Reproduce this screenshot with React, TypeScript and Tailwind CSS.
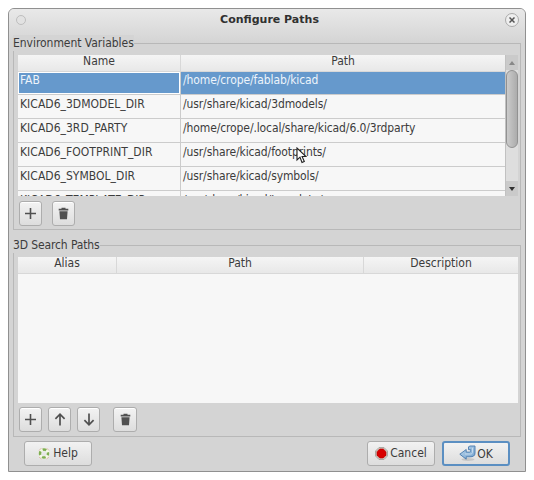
import type { ReactNode } from 'react';

const variables = [
  { name: 'KICAD6_3DMODEL_DIR', path: '/usr/share/kicad/3dmodels/' },
  { name: 'KICAD6_3RD_PARTY', path: '/home/crope/.local/share/kicad/6.0/3rdparty' },
  { name: 'KICAD6_FOOTPRINT_DIR', path: '/usr/share/kicad/footprints/' },
  { name: 'KICAD6_SYMBOL_DIR', path: '/usr/share/kicad/symbols/' },
  { name: 'KICAD6_TEMPLATE_DIR', path: '/usr/share/kicad/template/' },
];

function IconButton({ children, label, className = 'w-[23px]' }: { children: ReactNode; label: string; className?: string }) {
  return (
    <button
      aria-label={label}
      className={`flex h-[25px] shrink-0 items-center justify-center rounded-[3px] border border-[#adadad] bg-linear-to-b from-[#f3f3f3] to-[#dddddd] shadow-[inset_0_1px_0_#fff] ${className}`}
    >
      {children}
    </button>
  );
}

function Plus() {
  return (
    <svg width="13" height="13" viewBox="0 0 13 13" fill="none" stroke="#505050" strokeWidth="1.6">
      <path d="M6.5 1v11M1 6.5h11" />
    </svg>
  );
}

function Arrow({ down = false }: { down?: boolean }) {
  return (
    <svg width="12" height="13" viewBox="0 0 12 13" fill="none" stroke="#505050" strokeWidth="1.7" className={down ? 'rotate-180' : ''}>
      <path d="M6 12.5V1.5M1.4 5.8L6 1.2L10.6 5.8" />
    </svg>
  );
}

function Trash() {
  return (
    <svg width="11" height="13" viewBox="0 0 11 13" fill="#505050">
      <path d="M3.5 .7h4v1h2.8v1.8H.7V1.7h2.8zM1.4 4.2h8.2L9 12.2H2z" />
    </svg>
  );
}

function Lifebuoy() {
  return (
    <svg width="12" height="13" viewBox="0 0 12 13" fill="none">
      <circle cx="6" cy="6.5" r="4" stroke="#f4f7e8" strokeWidth="3" />
      <circle cx="6" cy="6.5" r="4" stroke="#7fae52" strokeWidth="2.5" strokeDasharray="3.7 2.583" strokeDashoffset="1.85" />
      <path d="M1 3.5L3.5 1M8.5 1L11 3.5M1 10l2.5 2M8.5 12l2.5-2" stroke="#d9b29c" strokeWidth="0.8" />
    </svg>
  );
}

function Stop() {
  return (
    <svg width="13" height="13" viewBox="0 0 13 13">
      <path d="M4 .5h5l3.500 3.500v5L9 12.500H4L.5 9V4z" fill="#d4d1c8" stroke="#a5a49f" strokeWidth="0.9" />
      <path d="M4.700 2h3.600L11 4.700v3.600L8.300 11H4.700L2 8.300V4.700z" fill="#d80000" stroke="#b80000" strokeWidth="0.7" />
    </svg>
  );
}

function Return() {
  return (
    <svg width="17" height="17" viewBox="0 0 17 17">
      <defs>
        <linearGradient id="blue" x1="0" y1="0" x2="1" y2="1">
          <stop offset="0" stopColor="#c1d9ed" />
          <stop offset="1" stopColor="#6e9fcd" />
        </linearGradient>
      </defs>
      <ellipse cx="9" cy="14.5" rx="6.5" ry="1.5" fill="#c6c6c6" />
      <path d="M9.5 1.8L11 1h5v7c0 3-2 3.8-5 3.8H7.2v2.4L.8 9.200l6.400-4.700v2.600h3c1.100 0 1.400-.4 1.400-1.500V4.700H9.500z" fill="url(#blue)" stroke="#4779ae" strokeWidth="0.9" />
      <path d="M13.500 2.800v4.600c0 1.100-.8 1.600-2 1.600H6" fill="none" stroke="#d5e5f3" strokeWidth="0.8" />
    </svg>
  );
}

function HeaderCell({ children, className }: { children: string; className: string }) {
  return <div className={`text-center leading-[13px] ${className}`}>{children}</div>;
}

const header = 'flex h-[17px] shrink-0 border-b border-[#d8d8d8] bg-linear-to-b from-[#f5f5f5] to-[#e8e8e8]';
const group = 'mx-1 flex shrink-0 flex-col border border-[#b8b8b8] pl-1 pr-[2px]';
const legend = '-ml-[5px] -mt-[9px] h-4 shrink-0 self-start bg-[#d4d4d4] leading-4';

export default function App() {
  return (
    <div className="relative h-[480px] w-[534px] overflow-hidden bg-white pl-2 pt-2 font-['DejaVu_Sans_Condensed','DejaVu_Sans',sans-serif] text-[12px] text-[#3c3c3c]">
      <div className="flex h-[464px] w-[518px] flex-col rounded-t-[6px] border border-[#909090] bg-[#d4d4d4]">
        <header className="flex h-[34px] shrink-0 items-start rounded-t-[5px] bg-linear-to-b from-[#e9e9e9] to-[#d4d4d4] pl-[7px] pr-[6px] pt-1">
          <span className="mt-[2px] h-[10px] w-[10px] rounded-full border border-[#bebebe] bg-[#e2e2e2]" />
          <h1 className="flex-1 pl-[8px] text-center font-['DejaVu_Sans',sans-serif] text-[11px] font-bold leading-[14px] text-[#303030]">Configure Paths</h1>
          <button aria-label="Close" className="flex h-[14px] w-[14px] items-center justify-center rounded-full border border-[#aaa] bg-[#eee]">
            <svg width="6" height="6" viewBox="0 0 6 6" stroke="#555" strokeWidth="1.5"><path d="M.5 .5l5 5M5.5 .5l-5 5" /></svg>
          </button>
        </header>

        <section className={`${group} h-[187px]`}>
          <h2 className={`${legend} tracking-[-0.04px]`}>Environment Variables</h2>
          <div className="mt-[4px] flex h-[141px] shrink-0">
            <div className="flex w-[487px] flex-col overflow-hidden bg-[#f7f7f7]">
              <div className={header}>
                <HeaderCell className="w-[163px] border-r border-[#d8d8d8]">Name</HeaderCell>
                <HeaderCell className="flex-1">Path</HeaderCell>
              </div>
              <div className="flex h-[22px] shrink-0 text-[#edf4fb]">
                <div className="w-[163px] border-r border-[#ccc] bg-white px-[1px] pb-[1px] pt-[1px]">
                  <div className="h-[20px] bg-[#6699cc] pl-[1px] leading-[15px]">FAB</div>
                </div>
                <div className="flex-1 bg-[#6699cc] pl-[2px] pt-[2px] leading-[13px] tracking-[-0.1px]">/home/crope/fablab/kicad</div>
              </div>
              {variables.map(({ name, path }) => (
                <div key={name} className="flex h-6 shrink-0 border-t border-[#cccccc] leading-[19px]">
                  <div className="w-[163px] border-r border-[#cccccc] pl-[2px] tracking-[0.03px]">{name}</div>
                  <div className="pl-[2px] tracking-[-0.11px]">{path}</div>
                </div>
              ))}
            </div>
            <div className="flex w-[13px] flex-col border-l border-[#c1c1c1] bg-[#dedede]">
              <div className="flex h-[15px] items-center justify-center bg-[#cacaca]">
                <svg width="6" height="4"><path d="M0 4L3 0l3 4z" fill="#888" /></svg>
              </div>
              <div className="h-[78px] rounded-full border border-[#929292] bg-linear-to-r from-[#cbcbcb] to-[#acacac]" />
              <div className="mt-auto flex h-[15px] items-center justify-center bg-[#cacaca]">
                <svg width="6" height="4"><path d="M0 0h6L3 4z" fill="#303030" /></svg>
              </div>
            </div>
          </div>
          <div className="mt-[5px] flex gap-[10px] pl-[1px]">
            <IconButton label="Add"><Plus /></IconButton>
            <IconButton label="Delete"><Trash /></IconButton>
          </div>
        </section>

        <section className={`${group} mt-[15px] h-[192px]`}>
          <h2 className={`${legend} tracking-[-0.12px]`}>3D Search Paths</h2>
          <div className="mt-[4px] h-[146px] shrink-0 bg-[#f7f7f7]">
            <div className={header}>
              <HeaderCell className="w-[99px] border-r border-[#d8d8d8]">Alias</HeaderCell>
              <HeaderCell className="w-[247px] border-r border-[#d8d8d8]">Path</HeaderCell>
              <HeaderCell className="flex-1">Description</HeaderCell>
            </div>
          </div>
          <div className="mt-[4px] flex gap-[6px] pl-[1px]">
            <IconButton label="Add"><Plus /></IconButton>
            <IconButton label="Move up"><Arrow /></IconButton>
            <IconButton label="Move down"><Arrow down /></IconButton>
            <IconButton label="Delete" className="ml-[7px] w-[24px]"><Trash /></IconButton>
          </div>
        </section>

        <footer className="mt-[4px] flex h-[25px] shrink-0 px-[15px]">
          <button className="flex w-[68px] items-center justify-center gap-[3px] rounded-[3px] border border-[#adadad] bg-linear-to-b from-[#f2f2f2] to-[#dddddd] pb-px"><Lifebuoy />Help</button>
          <button className="ml-auto flex w-[68px] items-center justify-center gap-[2px] rounded-[3px] border border-[#adadad] bg-linear-to-b from-[#f2f2f2] to-[#dddddd] pb-px"><Stop />Cancel</button>
          <button className="ml-[7px] flex w-[68px] items-center justify-center gap-[1px] rounded-[3px] border-2 border-[#5b8fc2] bg-linear-to-b from-[#f2f2f2] to-[#dddddd]"><Return />OK</button>
        </footer>
      </div>
      <svg className="absolute left-[296px] top-[147px]" width="11" height="17" viewBox="0 0 11 17">
        <path d="M1 1v12l3-2.800 2 5.300 2.300-1-2.200-5H10z" fill="#fff" stroke="#222" strokeWidth="1.1" />
      </svg>
    </div>
  );
}
